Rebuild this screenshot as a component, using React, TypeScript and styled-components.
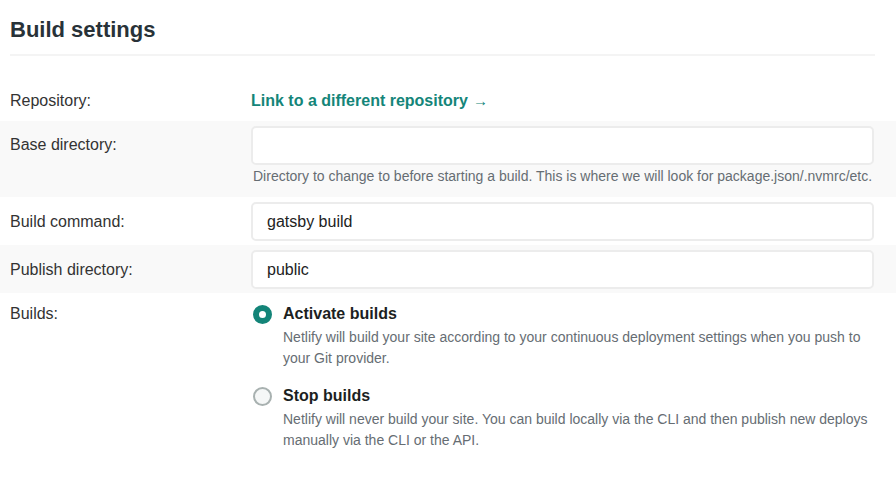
import React from "react";
import styled, { createGlobalStyle } from "styled-components";

const Global = createGlobalStyle`
  html, body { margin: 0; padding: 0; background: #fff; }
  body { font-family: "Liberation Sans", Arial, sans-serif; color: #333; }
  * { box-sizing: border-box; }
`;

const Page = styled.div`
  width: 896px;
  padding-top: 14px;
`;

const Header = styled.div`
  margin: 0 21px 0 10px;
  padding-bottom: 8px;
  border-bottom: 2px solid #f4f4f4;
`;

const Title = styled.h1`
  margin: 0;
  font-size: 22px;
  line-height: 32px;
  font-weight: 700;
  color: #283238;
`;

const Form = styled.div`
  margin-top: 24px;
`;

const Row = styled.div<{ $shaded?: boolean }>`
  display: grid;
  grid-template-columns: 241px 1fr;
  padding: 5px 22px 4px 10px;
  background: ${(p) => (p.$shaded ? "#f9f9f9" : "transparent")};
`;

const Label = styled.div<{ $lh?: number }>`
  font-size: 16px;
  line-height: ${(p) => p.$lh ?? 38}px;
  color: #333;
`;

const Field = styled.div`
  display: flex;
  flex-direction: column;
`;

const Input = styled.input`
  height: 39px;
  width: 100%;
  border: 2px solid #ececec;
  border-radius: 5px;
  background: #fff;
  padding: 0 14px;
  font-family: "Liberation Sans", Arial, sans-serif;
  font-size: 16px;
  color: #222;
  outline: none;
`;

const Help = styled.div`
  margin: 1px 0 0 2px;
  padding-bottom: 7px;
  font-size: 14px;
  line-height: 20px;
  color: #666d73;
`;

const RepoLink = styled.a`
  font-size: 16px;
  font-weight: 700;
  line-height: 32px;
  color: #148579;
  text-decoration: none;
`;

const Arrow = styled.span`
  font-weight: 400;
  font-size: 15px;
  margin-left: 5px;
`;

const Options = styled.div`
  display: flex;
  flex-direction: column;
  gap: 16px;
  padding: 5px 0 0 2px;
`;

const Option = styled.label`
  display: grid;
  grid-template-columns: 30px 1fr;
  cursor: pointer;
`;

const Radio = styled.span<{ $on?: boolean }>`
  width: 19px;
  height: 19px;
  margin-top: 2px;
  border-radius: 50%;
  background: ${(p) => (p.$on ? "#fff" : "#f5f7f7")};
  border: ${(p) => (p.$on ? "6px solid #138478" : "2px solid #a8b1b0")};
`;

const OptionTitle = styled.div`
  font-size: 16px;
  font-weight: 700;
  line-height: 22px;
  color: #1c1f22;
`;

const OptionDesc = styled.div`
  font-size: 14px;
  line-height: 21px;
  color: #666d73;
  padding-top: 2px;
`;

export default function App() {
  return (
    <Page>
      <Global />
      <Header>
        <Title>Build settings</Title>
      </Header>
      <Form>
        <Row>
          <Label $lh={32}>Repository:</Label>
          <div>
            <RepoLink href="#">
              Link to a different repository<Arrow>→</Arrow>
            </RepoLink>
          </div>
        </Row>
        <Row $shaded>
          <Label>Base directory:</Label>
          <Field>
            <Input defaultValue="" />
            <Help>
              Directory to change to before starting a build. This is where we will look for package.json/.nvmrc/etc.
            </Help>
          </Field>
        </Row>
        <Row>
          <Label $lh={39}>Build command:</Label>
          <Field>
            <Input defaultValue="gatsby build" />
          </Field>
        </Row>
        <Row $shaded>
          <Label $lh={39}>Publish directory:</Label>
          <Field>
            <Input defaultValue="public" />
          </Field>
        </Row>
        <Row>
          <Label $lh={32}>Builds:</Label>
          <Options>
            <Option>
              <Radio $on />
              <div>
                <OptionTitle>Activate builds</OptionTitle>
                <OptionDesc>
                  Netlify will build your site according to your continuous deployment settings when you push to
                  your Git provider.
                </OptionDesc>
              </div>
            </Option>
            <Option>
              <Radio />
              <div>
                <OptionTitle>Stop builds</OptionTitle>
                <OptionDesc>
                  Netlify will never build your site. You can build locally via the CLI and then publish new deploys
                  manually via the CLI or the API.
                </OptionDesc>
              </div>
            </Option>
          </Options>
        </Row>
      </Form>
    </Page>
  );
}
